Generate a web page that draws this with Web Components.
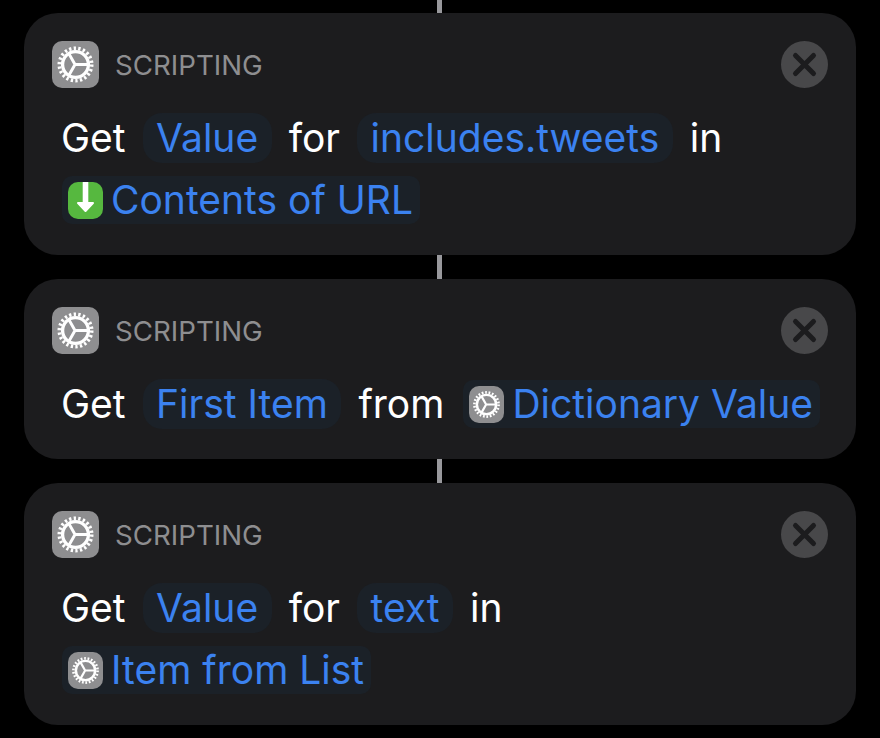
<!DOCTYPE html>
<html>
<head>
<meta charset="utf-8">
<style>
  html, body { margin: 0; background: #000; }
  body { height: 738px; overflow: hidden; font-family: Inter, "Liberation Sans", sans-serif; }
  action-list { padding-top: 13px; }
</style>
</head>
<body>
<action-list>
  <action-card>
    <action-row>
      <span>Get</span>
      <var-token>Value</var-token>
      <span>for</span>
      <var-token>includes.tweets</var-token>
      <span>in</span>
    </action-row>
    <action-row>
      <var-token icon="download">Contents of URL</var-token>
    </action-row>
  </action-card>
  <action-card>
    <action-row>
      <span>Get</span>
      <var-token>First Item</var-token>
      <span>from</span>
      <var-token icon="gear" style="margin-left: 2px">Dictionary Value</var-token>
    </action-row>
  </action-card>
  <action-card>
    <action-row>
      <span>Get</span>
      <var-token>Value</var-token>
      <span>for</span>
      <var-token>text</var-token>
      <span>in</span>
    </action-row>
    <action-row>
      <var-token icon="gear">Item from List</var-token>
    </action-row>
  </action-card>
</action-list>

<script>
'use strict';

(function() {
  // the settings cog, used big in the card header and small inside tokens
  const gearSvg = `
    <svg viewBox="0 0 48 48" width="100%" height="100%" fill="none" stroke="#fff">
      <circle cx="24" cy="24" r="16.6" stroke-width="3.6" stroke-dasharray="2.37 2.37"/>
      <circle cx="24" cy="24" r="13.2" stroke-width="3.4"/>
      <path d="M23.5 24H37M23.5 24L17 12.5M23.5 24L17 35.5" stroke-width="3"/>
    </svg>`;

  class AppIcon extends HTMLElement {
    connectedCallback() {
      const isDownload = this.getAttribute('name') === 'download';
      const shadow = this.attachShadow({ mode: 'open' });
      shadow.innerHTML = `
        <style>
          :host {
            display: block;
            box-sizing: border-box;
            width: var(--icon-width, 47px);
            height: var(--icon-height, 47px);
            border-radius: 10px;
            background: ${isDownload ? '#56b83f' : '#8e8e90'};
            flex: none;
          }
          svg { display: block; }
        </style>
        ${isDownload ? `
          <svg viewBox="0 0 35 37" width="100%" height="100%">
            <path d="M17.5 0V22" stroke="#fff" stroke-width="5.6" fill="none"/>
            <path d="M10 21H25L17.5 29Z" fill="#fff" stroke="#fff" stroke-width="2" stroke-linejoin="round"/>
          </svg>` : gearSvg}
      `;
    }
  }
  customElements.define('app-icon', AppIcon);

  class VarToken extends HTMLElement {
    connectedCallback() {
      const icon = this.getAttribute('icon');
      const shadow = this.attachShadow({ mode: 'open' });
      shadow.innerHTML = `
        <style>
          :host {
            display: inline-flex;
            align-items: center;
            height: 50px;
            padding: 0 13.5px;
            box-sizing: border-box;
            border-radius: 19px;
            background: #1b2128;
            color: #3b82f0;
            white-space: nowrap;
          }
          :host([icon]) {
            height: 48px;
            padding: 0 7px 0 6px;
            border-radius: 10px;
            gap: 8px;
            --icon-width: 35px;
            --icon-height: 37px;
          }
        </style>
        ${icon ? `<app-icon name="${icon}"></app-icon>` : ''}
        <slot></slot>
      `;
    }
  }
  customElements.define('var-token', VarToken);

  class ActionRow extends HTMLElement {
    constructor() {
      super();
      const shadow = this.attachShadow({ mode: 'open' });
      shadow.innerHTML = `
        <style>
          :host {
            display: flex;
            align-items: center;
            gap: 17px;
            height: 50px;
          }
          ::slotted(span:first-child) { margin-left: -1px; }
        </style>
        <slot></slot>
      `;
    }
  }
  customElements.define('action-row', ActionRow);

  class ActionCard extends HTMLElement {
    constructor() {
      super();
      const shadow = this.attachShadow({ mode: 'open' });
      shadow.innerHTML = `
        <style>
          :host {
            display: block;
            box-sizing: border-box;
            margin: 0 24px;
            padding: 28px 28px 30px;
            border-radius: 34px;
            background: #1c1c1e;
          }
          .head {
            display: flex;
            align-items: center;
            height: 47px;
            gap: 17px;
          }
          .label {
            flex: 1;
            color: #8e8e90;
            font-size: 27.7px;
            margin-left: -1px;
          }
          .close {
            width: 47px;
            height: 47px;
            border-radius: 50%;
            background: #48484a;
            flex: none;
          }
          .close svg { display: block; }
          .body {
            display: flex;
            flex-direction: column;
            gap: 12px;
            margin: 25px 10px 0;
            color: #fff;
            font-size: 39px;
            line-height: 50px;
          }
        </style>
        <div class="head">
          <app-icon name="gear"></app-icon>
          <div class="label">SCRIPTING</div>
          <div class="close">
            <svg viewBox="0 0 47 47" width="47" height="47">
              <path d="M14.5 14.5L32.5 32.5M32.5 14.5L14.5 32.5" stroke="#1c1c1e" stroke-width="5" stroke-linecap="round"/>
            </svg>
          </div>
        </div>
        <div class="body"><slot></slot></div>
      `;
    }
  }
  customElements.define('action-card', ActionCard);

  class ActionList extends HTMLElement {
    constructor() {
      super();
      const shadow = this.attachShadow({ mode: 'open' });
      shadow.innerHTML = `
        <style>
          :host { display: block; position: relative; }
          ::slotted(action-card) { margin-bottom: 24px; }
          .wire {
            position: absolute;
            top: 0;
            bottom: 0;
            left: 437px;
            width: 5px;
            background: #98989c;
          }
          .stack { position: relative; }
        </style>
        <div class="wire"></div>
        <div class="stack"><slot></slot></div>
      `;
    }
  }
  customElements.define('action-list', ActionList);
})();
</script>
</body>
</html>
